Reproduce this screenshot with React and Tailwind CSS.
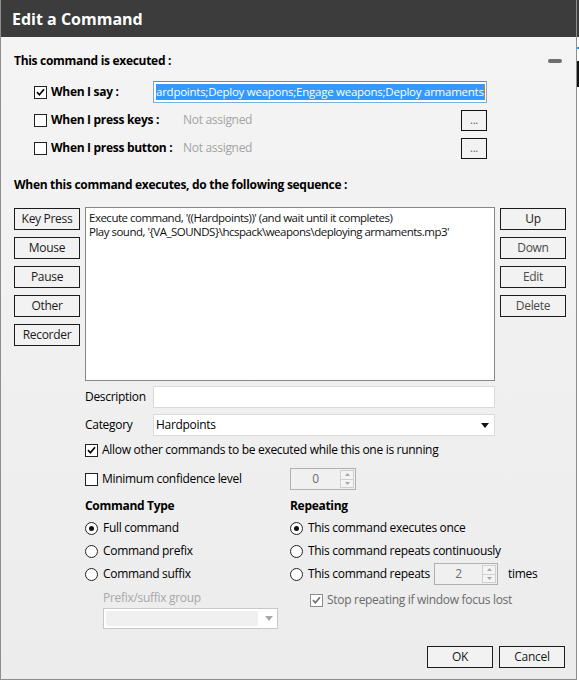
import React from 'react';

const Check = ({ checked, disabled }) => (
  <span
    className={`w-[13px] h-[13px] shrink-0 border bg-white flex items-center justify-center ${
      disabled ? 'border-[#8c8c8c]' : 'border-[#222]'
    }`}
  >
    {checked && (
      <svg width="9" height="9" viewBox="0 0 9 9">
        <path
          d="M1 4.2 L3.4 6.8 L8 1.2"
          fill="none"
          stroke={disabled ? '#707070' : '#000'}
          strokeWidth="1.7"
        />
      </svg>
    )}
  </span>
);

const Radio = ({ checked }) => (
  <span className="w-[13px] h-[13px] shrink-0 rounded-full border border-[#222] bg-white flex items-center justify-center">
    {checked && <span className="w-[5px] h-[5px] rounded-full bg-[#111]" />}
  </span>
);

const Btn = ({ children, dim }) => (
  <button
    type="button"
    className={`w-[66px] h-[22px] border border-[#1c1c1c] bg-[#f2f2f2] flex items-center justify-center text-[12px] ${
      dim ? 'text-[#4a4a4a]' : 'text-[#1a1a1a]'
    }`}
  >
    {children}
  </button>
);

const Spin = ({ value, width }) => (
  <div className={`${width} shrink-0 h-[22px] border border-[#b0b0b0] bg-[#f0f0f0] flex items-center`}>
    <span className="flex-1 text-center text-[#6e6e6e]">{value}</span>
    <span className="w-[14px] h-[18px] mr-[1px] border border-[#cfcfcf] bg-[#f4f4f4] flex flex-col">
      <span className="flex-1 flex items-center justify-center border-b border-[#cfcfcf]">
        <svg width="5" height="3" viewBox="0 0 5 3"><path d="M0 3 L2.5 0 L5 3 Z" fill="#a8a8a8" /></svg>
      </span>
      <span className="flex-1 flex items-center justify-center">
        <svg width="5" height="3" viewBox="0 0 5 3"><path d="M0 0 L2.5 3 L5 0 Z" fill="#a8a8a8" /></svg>
      </span>
    </span>
  </div>
);

export default function App() {
  return (
    <div className="w-[579px] h-[682px] bg-white flex overflow-hidden font-['Open_Sans',sans-serif] text-[12px] tracking-[-0.3px] text-black leading-none">
      <div className="w-[577px] h-[680px] border-l border-r border-b border-[#8e8e8e] flex flex-col shrink-0">
        {/* title bar */}
        <div className="h-[37px] bg-[#3c3c3c] flex items-center pl-[11px] text-white font-bold text-[16px] tracking-[0px]">
          Edit a Command
        </div>

        <div className="flex-1 flex flex-col pl-[13px] pr-[10px] bg-gradient-to-b from-[#f4f4f4] to-[#ececec]">
          {/* header */}
          <div className="mt-[15px] h-[18px] flex items-center justify-between">
            <span className="font-bold">This command is executed :</span>
            <span className="w-[14px] h-[4px] rounded-[2px] bg-[#6e6e6e] mr-[4px]" />
          </div>

          {/* triggers */}
          <div className="ml-[20px] w-[453px] flex flex-col">
            <div className="mt-[11px] h-[22px] flex items-center">
              <Check checked />
              <span className="ml-[4px] w-[102px] font-bold">When I say :</span>
              <div className="w-[334px] h-[22px] border border-[#7aaee0] border-t-[#4d8fd0] bg-white flex items-center pl-[2px] overflow-hidden">
                <span className="bg-[#3399ff] text-white h-[16px] flex items-center whitespace-nowrap text-[11.5px] tracking-[-0.25px]">
                  ardpoints;Deploy weapons;Engage weapons;Deploy armaments
                </span>
                <span className="w-[1px] h-[16px] bg-[#d9791e]" />
              </div>
            </div>
            <div className="mt-[6px] h-[22px] flex items-center">
              <Check />
              <span className="ml-[4px] w-[132px] font-bold">When I press keys :</span>
              <span className="flex-1 text-[#a3a3a3]">Not assigned</span>
              <button type="button" className="w-[26px] h-[21px] border border-[#111] bg-[#f2f2f2] flex items-end justify-center pb-[5px] text-[#555] text-[11px]">
                ...
              </button>
            </div>
            <div className="mt-[6px] h-[22px] flex items-center">
              <Check />
              <span className="ml-[4px] w-[132px] font-bold">When I press button :</span>
              <span className="flex-1 text-[#a3a3a3]">Not assigned</span>
              <button type="button" className="w-[26px] h-[21px] border border-[#111] bg-[#f2f2f2] flex items-end justify-center pb-[5px] text-[#555] text-[11px]">
                ...
              </button>
            </div>
          </div>

          <div className="mt-[17px] h-[18px] flex items-center font-bold">
            When this command executes, do the following sequence :
          </div>

          {/* sequence */}
          <div className="mt-[13px] flex items-start">
            <div className="mt-[1px] flex flex-col gap-[7px]">
              <Btn>Key Press</Btn>
              <Btn>Mouse</Btn>
              <Btn>Pause</Btn>
              <Btn>Other</Btn>
              <Btn>Recorder</Btn>
            </div>
            <div className="ml-[5px] w-[410px] h-[174px] border border-[#85878c] bg-white pl-[3px] pt-[3px] flex flex-col gap-[1px] text-[11.5px] tracking-[-0.5px] leading-[13px] text-[#111]">
              <span>Execute command, '((Hardpoints))' (and wait until it completes)</span>
              <span>Play sound, '{'{'}VA_SOUNDS{'}'}\hcspack\weapons\deploying armaments.mp3'</span>
            </div>
            <div className="ml-[5px] mt-[1px] flex flex-col gap-[7px]">
              <Btn>Up</Btn>
              <Btn dim>Down</Btn>
              <Btn dim>Edit</Btn>
              <Btn dim>Delete</Btn>
            </div>
          </div>

          {/* properties */}
          <div className="ml-[71px] w-[410px] flex flex-col">
            <div className="mt-[5px] h-[22px] flex items-center">
              <span className="w-[68px]">Description</span>
              <div className="flex-1 h-[22px] border border-[#dadada] bg-white" />
            </div>
            <div className="mt-[6px] h-[22px] flex items-center">
              <span className="w-[68px]">Category</span>
              <div className="flex-1 h-[22px] border border-[#dadada] bg-white flex items-center pl-[2px] pr-[5px]">
                <span className="flex-1">Hardpoints</span>
                <svg width="8" height="5" viewBox="0 0 8 5"><path d="M0 0 L8 0 L4 5 Z" fill="#111" /></svg>
              </div>
            </div>
            <div className="mt-[5px] h-[18px] flex items-center">
              <Check checked />
              <span className="ml-[4px]">Allow other commands to be executed while this one is running</span>
            </div>
            <div className="mt-[9px] h-[22px] flex items-center">
              <Check />
              <span className="ml-[4px] w-[188px] shrink-0">Minimum confidence level</span>
              <Spin value="0" width="w-[66px]" />
            </div>

            <div className="flex">
              {/* command type */}
              <div className="w-[205px] shrink-0 flex flex-col">
                <div className="mt-[7px] h-[18px] flex items-center font-bold">Command Type</div>
                <div className="mt-[2px] h-[22px] flex items-center">
                  <Radio checked />
                  <span className="ml-[5px]">Full command</span>
                </div>
                <div className="mt-[1px] h-[22px] flex items-center">
                  <Radio />
                  <span className="ml-[5px]">Command prefix</span>
                </div>
                <div className="mt-[1px] h-[22px] flex items-center">
                  <Radio />
                  <span className="ml-[5px]">Command suffix</span>
                </div>
                <div className="ml-[18px] mt-[5px] h-[16px] flex items-center text-[#a8a8a8]">Prefix/suffix group</div>
                <div className="ml-[18px] mt-[2px] w-[175px] h-[21px] border border-[#c8c8c8] bg-white flex items-center p-[2px] pr-[4px]">
                  <span className="flex-1 h-full bg-[#f0f0f0]" />
                  <svg className="ml-[7px]" width="8" height="5" viewBox="0 0 8 5"><path d="M0 0 L8 0 L4 5 Z" fill="#a8a8a8" /></svg>
                </div>
              </div>

              {/* repeating */}
              <div className="w-[250px] shrink-0 flex flex-col">
                <div className="mt-[7px] h-[18px] flex items-center font-bold">Repeating</div>
                <div className="mt-[2px] h-[22px] flex items-center">
                  <Radio checked />
                  <span className="ml-[5px]">This command executes once</span>
                </div>
                <div className="mt-[1px] h-[22px] flex items-center">
                  <Radio />
                  <span className="ml-[5px]">This command repeats continuously</span>
                </div>
                <div className="mt-[1px] h-[22px] flex items-center">
                  <Radio />
                  <span className="ml-[5px] w-[126px] shrink-0">This command repeats</span>
                  <Spin value="2" width="w-[64px]" />
                  <span className="ml-[10px]">times</span>
                </div>
                <div className="ml-[20px] mt-[6px] h-[18px] flex items-center">
                  <Check checked disabled />
                  <span className="ml-[4px] text-[#6a6a6a]">Stop repeating if window focus lost</span>
                </div>
              </div>
            </div>
          </div>

          {/* footer */}
          <div className="mt-auto mb-[11px] flex justify-end gap-[6px] pr-[1px]">
            <Btn>OK</Btn>
            <Btn>Cancel</Btn>
          </div>
        </div>
      </div>

      {/* window behind */}
      <div className="flex-1 flex flex-col">
        <div className="h-[37px] bg-[#3c3c3c]" />
        <div className="mt-[10px] h-[2px] bg-[#4a8fd6]" />
        <div className="mt-[12px] h-[26px] bg-[#111]" />
      </div>
    </div>
  );
}
